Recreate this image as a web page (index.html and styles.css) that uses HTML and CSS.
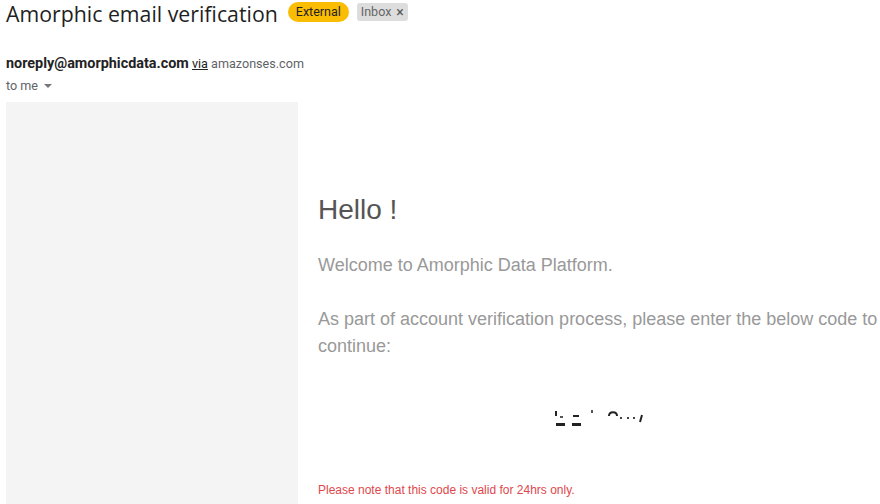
FILE: index.html
```html
<!DOCTYPE html>
<html>
<head>
<meta charset="utf-8">
<link rel="stylesheet" href="styles.css">
</head>
<body>
<div class="page">
  <div class="subject-row">
    <h1 class="subject">Amorphic email verification</h1>
    <span class="badge-external">External</span>
    <span class="badge-inbox">Inbox <span class="x">×</span></span>
  </div>
  <div class="sender">
    <span class="from">noreply@amorphicdata.com</span>
    <span class="via">via</span>
    <span class="domain">amazonses.com</span>
  </div>
  <div class="tome">to me <span class="caret"></span></div>
  <div class="mail">
    <div class="side"></div>
    <div class="content">
      <div class="hello">Hello !</div>
      <p class="para">Welcome to Amorphic Data Platform.</p>
      <p class="para">As part of account verification process, please enter the below code to continue:</p>
      <div class="code">
        <svg width="92" height="20" viewBox="0 0 92 20">
          <rect x="1" y="3" width="2" height="5" fill="#222"/>
          <rect x="2" y="15" width="9" height="3" fill="#222"/>
          <rect x="6" y="8" width="3" height="2" fill="#555"/>
          <rect x="18" y="15" width="9" height="3" fill="#222"/>
          <rect x="19" y="7" width="6" height="2" fill="#222"/>
          <rect x="37" y="2" width="2" height="3" fill="#555"/>
          <path d="M55 8 C55 3 63 3 63 8" stroke="#222" stroke-width="2" fill="none"/>
          <rect x="66" y="9" width="2" height="2" fill="#444"/>
          <rect x="73" y="9" width="2" height="2" fill="#444"/>
          <rect x="79" y="9" width="2" height="2" fill="#444"/>
          <path d="M88 7 L86 14" stroke="#222" stroke-width="2"/>
        </svg>
      </div>
      <p class="note">Please note that this code is valid for 24hrs only.</p>
    </div>
  </div>
</div>
</body>
</html>
```
FILE: styles.css
```css
html, body {
  margin: 0;
  padding: 0;
  background: #fff;
  overflow: hidden;
}
.page {
  width: 880px;
  height: 504px;
  padding-left: 6px;
  box-sizing: border-box;
  font-family: Roboto, "Liberation Sans", Arial, sans-serif;
}
.subject-row {
  display: flex;
  align-items: flex-start;
  height: 26px;
}
.subject {
  margin: 0;
  font-family: "Open Sans", Roboto, sans-serif;
  font-weight: 400;
  font-size: 21.3px;
  color: #1f1f1f;
  line-height: 29px;
  height: 26px;
  margin-top: -1px;
}
.badge-external {
  margin-top: 2px;
  margin-left: 10px;
  background: #fbbc04;
  color: #222;
  font-size: 12.5px;
  line-height: 20px;
  height: 20px;
  padding: 0 8px;
  border-radius: 10px;
}
.badge-inbox {
  margin-top: 3px;
  margin-left: 8px;
  background: #dddddd;
  color: #666;
  font-size: 12.5px;
  line-height: 18px;
  height: 18px;
  padding: 0 4px;
  border-radius: 3px;
  display: flex;
  align-items: center;
  gap: 5px;
}
.badge-inbox .x {
  font-size: 14px;
  color: #555;
}
.sender {
  margin-top: 29px;
  line-height: 18px;
  font-size: 12.6px;
  color: #5f6368;
}
.from {
  font-weight: 700;
  font-size: 14.4px;
  color: #222;
}
.via {
  text-decoration: underline;
  color: #222;
}
.tome {
  margin-top: 5px;
  font-size: 12.6px;
  color: #5f6368;
  line-height: 16px;
  display: flex;
  align-items: center;
  gap: 6px;
}
.caret {
  width: 0;
  height: 0;
  border-left: 4px solid transparent;
  border-right: 4px solid transparent;
  border-top: 4px solid #777;
}
.mail {
  margin-top: 8px;
  display: flex;
  height: 402px;
}
.side {
  width: 292px;
  flex: none;
  background: #f4f4f4;
}
.content {
  width: 560px;
  flex: none;
  padding: 0 20px;
  font-family: "Liberation Sans", Arial, sans-serif;
}
.hello {
  margin-top: 92px;
  font-size: 28px;
  color: #555;
  line-height: 32px;
}
.para {
  margin: 26px 0 0;
  font-size: 18px;
  color: #999;
  line-height: 27px;
}
.para + .para {
  margin-top: 27px;
}
.code {
  margin-top: 48px;
  display: flex;
  justify-content: center;
  height: 26px;
  padding-left: 4px;
}
.note {
  margin: 48px 0 0;
  font-size: 12px;
  color: #e0474c;
  line-height: 16px;
}
```
